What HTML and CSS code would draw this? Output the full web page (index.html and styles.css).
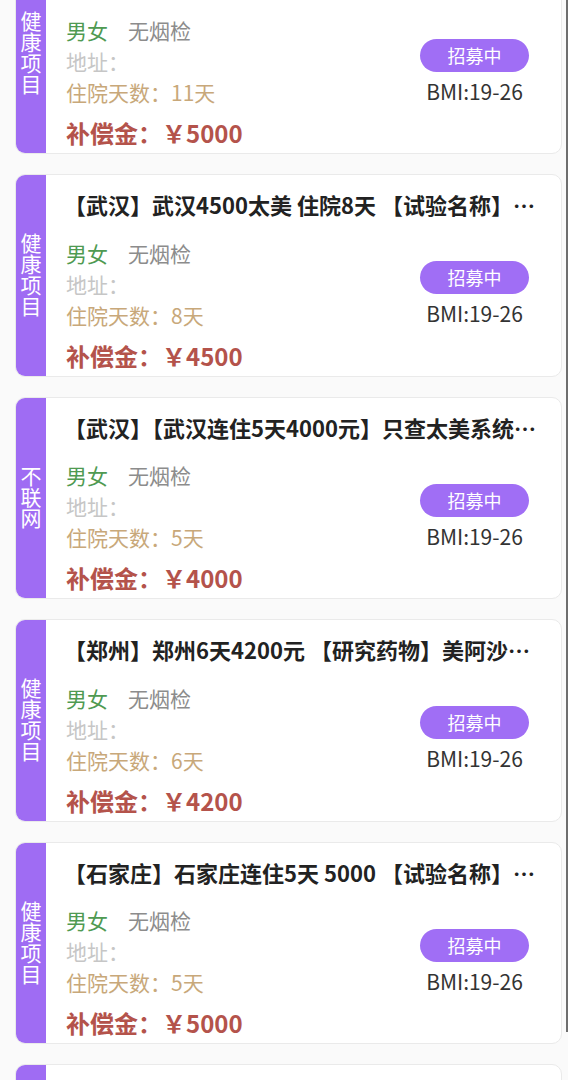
FILE: index.html
```html
<!DOCTYPE html>
<html lang="zh-CN">
  <head>
    <meta charset="utf-8">
    <title>项目列表</title>
    <link rel="stylesheet" href="styles.css">
  </head>
  <body>
    <div class="page">
      <!-- project list, scrolled a little down -->
      <ul class="project-list">
        <li class="card">
          <div class="card-tag">健康项目</div>
          <div class="card-body">
            <p class="card-title">【武汉】武汉5000 住院11天 【试验名称】健康受试者</p>
            <div class="card-main">
              <div class="card-info">
                <p class="info-line"><span class="sex">男女</span><span class="check">无烟检</span></p>
                <p class="info-line addr">地址：</p>
                <p class="info-line days">住院天数：11天</p>
                <p class="pay">补偿金：￥5000</p>
              </div>
              <div class="card-status">
                <span class="badge">招募中</span>
                <span class="bmi">BMI:19-26</span>
              </div>
            </div>
          </div>
        </li>
        <li class="card">
          <div class="card-tag">健康项目</div>
          <div class="card-body">
            <p class="card-title">【武汉】武汉4500太美 住院8天 【试验名称】健康受试者</p>
            <div class="card-main">
              <div class="card-info">
                <p class="info-line"><span class="sex">男女</span><span class="check">无烟检</span></p>
                <p class="info-line addr">地址：</p>
                <p class="info-line days">住院天数：8天</p>
                <p class="pay">补偿金：￥4500</p>
              </div>
              <div class="card-status">
                <span class="badge">招募中</span>
                <span class="bmi">BMI:19-26</span>
              </div>
            </div>
          </div>
        </li>
        <li class="card">
          <div class="card-tag">不联网</div>
          <div class="card-body">
            <p class="card-title">【武汉】【武汉连住5天4000元】只查太美系统不联网</p>
            <div class="card-main">
              <div class="card-info">
                <p class="info-line"><span class="sex">男女</span><span class="check">无烟检</span></p>
                <p class="info-line addr">地址：</p>
                <p class="info-line days">住院天数：5天</p>
                <p class="pay">补偿金：￥4000</p>
              </div>
              <div class="card-status">
                <span class="badge">招募中</span>
                <span class="bmi">BMI:19-26</span>
              </div>
            </div>
          </div>
        </li>
        <li class="card">
          <div class="card-tag">健康项目</div>
          <div class="card-body">
            <p class="card-title">【郑州】郑州6天4200元 【研究药物】美阿沙坦钾片</p>
            <div class="card-main">
              <div class="card-info">
                <p class="info-line"><span class="sex">男女</span><span class="check">无烟检</span></p>
                <p class="info-line addr">地址：</p>
                <p class="info-line days">住院天数：6天</p>
                <p class="pay">补偿金：￥4200</p>
              </div>
              <div class="card-status">
                <span class="badge">招募中</span>
                <span class="bmi">BMI:19-26</span>
              </div>
            </div>
          </div>
        </li>
        <li class="card">
          <div class="card-tag">健康项目</div>
          <div class="card-body">
            <p class="card-title">【石家庄】石家庄连住5天 5000 【试验名称】健康受试者</p>
            <div class="card-main">
              <div class="card-info">
                <p class="info-line"><span class="sex">男女</span><span class="check">无烟检</span></p>
                <p class="info-line addr">地址：</p>
                <p class="info-line days">住院天数：5天</p>
                <p class="pay">补偿金：￥5000</p>
              </div>
              <div class="card-status">
                <span class="badge">招募中</span>
                <span class="bmi">BMI:19-26</span>
              </div>
            </div>
          </div>
        </li>
        <li class="card">
          <div class="card-tag">健康项目</div>
          <div class="card-body">
            <p class="card-title">【武汉】武汉连住6天 【试验名称】健康受试者</p>
            <div class="card-main">
              <div class="card-info">
                <p class="info-line"><span class="sex">男女</span><span class="check">无烟检</span></p>
                <p class="info-line addr">地址：</p>
                <p class="info-line days">住院天数：6天</p>
                <p class="pay">补偿金：￥4500</p>
              </div>
              <div class="card-status">
                <span class="badge">招募中</span>
                <span class="bmi">BMI:19-26</span>
              </div>
            </div>
          </div>
        </li>
      </ul>
    </div>
  </body>
</html>
```

FILE: styles.css
```css
html, body {
  margin: 0;
  height: 100%;
  overflow: hidden;
}

body {
  font-family: "Noto Sans CJK SC", "Noto Sans", sans-serif;
  background-color: #fafafa;
}

.page {
  height: 100%;
  border-right: 2px solid #6e6e6e;
}

.project-list {
  list-style: none;
  margin: -48.5px 0 0;
  padding: 0 4px 0 15px;
}

.card {
  display: flex;
  height: 202.5px;
  box-sizing: border-box;
  margin-bottom: 20px;
  background-color: #fff;
  border: 1px solid #eaeaea;
  border-radius: 10px;
  overflow: hidden;
}

.card-tag {
  flex: 0 0 31px;
  margin: -1px 0 -1px -1px;
  display: flex;
  align-items: center;
  justify-content: center;
  background-color: #9f6cf3;
  color: #fff;
  font-size: 21px;
  line-height: 31px;
  writing-mode: vertical-rl;
}

.card-body {
  flex: 1;
  min-width: 0;
  padding: 15px 18px 0 20px;
}

.card-title {
  margin: 0 0 0 -2px;
  font-size: 22px;
  font-weight: bold;
  line-height: 28px;
  color: #222;
  white-space: nowrap;
  overflow: hidden;
  text-overflow: ellipsis;
}

.card-main {
  display: flex;
  justify-content: space-between;
  margin-top: 19.5px;
}

.info-line {
  margin: 0;
  font-size: 21px;
  line-height: 31px;
}

.sex {
  color: #4f9a52;
  margin-right: 20px;
}

.check {
  color: #8c8c8c;
}

.addr {
  color: #c6c6c6;
}

.days {
  color: #c8a87a;
}

.pay {
  margin: 9px 0 0;
  font-size: 24px;
  font-weight: bold;
  line-height: 31px;
  color: #b4534b;
}

.card-status {
  display: flex;
  flex-direction: column;
  align-items: center;
  padding: 23.5px 14px 0 0;
}

.badge {
  width: 109px;
  height: 33px;
  border-radius: 17px;
  background-color: #a06ef5;
  color: #fff;
  font-size: 18px;
  line-height: 33px;
  text-align: center;
}

.bmi {
  margin-top: 4px;
  font-size: 21px;
  line-height: 30px;
  color: #333;
}
```
